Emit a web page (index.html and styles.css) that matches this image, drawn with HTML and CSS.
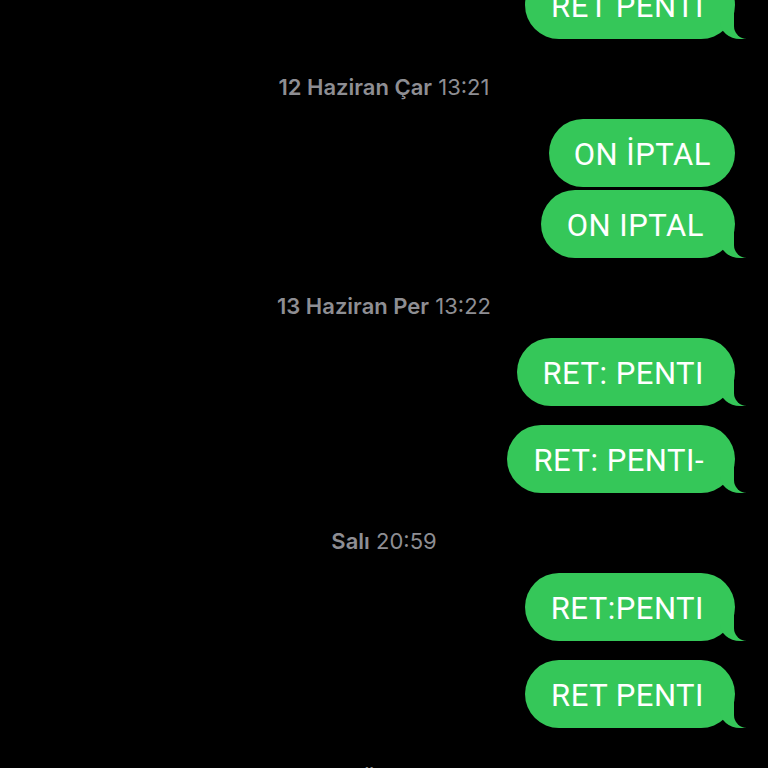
FILE: index.html
```html
<!DOCTYPE html>
<html lang="tr">
<head>
  <meta charset="UTF-8" />
  <title>Mesajlar</title>
  <link rel="stylesheet" href="styles.css">
</head>
<body>

  <!-- Mesaj akışı -->
  <div class="thread">
    <div class="msg tail">RET PENTI</div>

    <div class="stamp"><b>12 Haziran Çar</b> 13:21</div>
    <div class="msg">ON İPTAL</div>
    <div class="msg tail next">ON IPTAL</div>

    <div class="stamp"><b>13 Haziran Per</b> 13:22</div>
    <div class="msg tail">RET: PENTI</div>
    <div class="msg tail sep">RET: PENTI-</div>

    <div class="stamp"><b>Salı</b> 20:59</div>
    <div class="msg tail">RET:PENTI</div>
    <div class="msg tail sep">RET PENTI</div>

    <div class="stamp"><b>Bugün</b> 11:02</div>
  </div>

</body>
</html>
```

FILE: styles.css
```css
body {
  margin: 0;
  background: #000;
  font-family: Inter, 'Noto Sans', sans-serif;
  overflow: hidden;
}
.thread {
  display: flex;
  flex-direction: column;
  align-items: flex-end;
  margin-top: -29px;
  padding-right: 33px;
}
.msg {
  position: relative;
  height: 68px;
  box-sizing: border-box;
  padding: 4px 24px 0 25px;
  line-height: 64px;
  font-family: Roboto, Inter, sans-serif;
  font-size: 31px;
  letter-spacing: 0.5px;
  color: #fff;
  background: #35c759;
  border-radius: 34px;
  white-space: nowrap;
}
.msg.tail {
  padding-right: 31px;
  padding-left: 26px;
}
.msg.next {
  margin-top: 3px;
}
.msg.sep {
  margin-top: 19px;
}
/* kuyruk */
.msg.tail::before,
.msg.tail::after {
  content: "";
  position: absolute;
  bottom: 0;
  height: 26px;
}
.msg.tail::before {
  right: -11px;
  width: 0;
  border-right: 26px solid #35c759;
  border-bottom-left-radius: 20px 17px;
}
.msg.tail::after {
  right: -30px;
  width: 31px;
  background: #000;
  border-bottom-left-radius: 13px;
}
.stamp {
  align-self: stretch;
  text-align: center;
  padding: 36px 0 20px 33px;
  line-height: 24px;
  font-size: 22px;
  color: #8e8e93;
}
.stamp b {
  font-weight: 600;
}
```
